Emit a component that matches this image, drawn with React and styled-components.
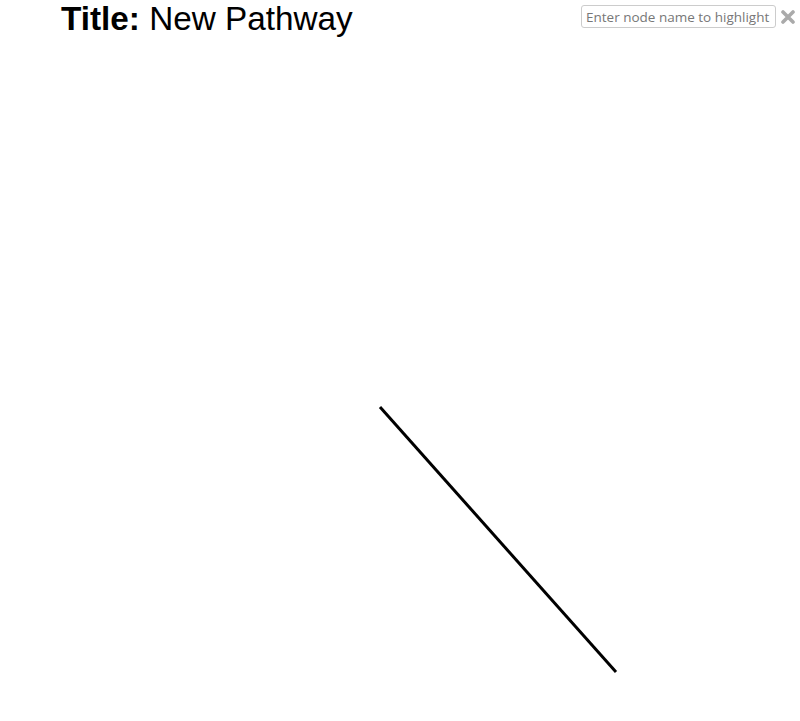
import React from "react"
import styled, { createGlobalStyle } from "styled-components"

const Global = createGlobalStyle`
  html, body { margin: 0; padding: 0; background: #fff; }
  body { width: 800px; height: 721px; overflow: hidden; }
`

const Page = styled.div`
  position: relative;
  width: 800px;
  height: 721px;
`

const Header = styled.header`
  display: flex;
  justify-content: space-between;
  align-items: flex-start;
  padding: 0 5px 0 61px;
`

const Title = styled.h1`
  margin: 0;
  font-family: "Liberation Sans", Arial, sans-serif;
  font-size: 33.3px;
  font-weight: normal;
  line-height: 38px;
  color: #000;
  b { font-weight: bold; }
`

const Search = styled.div`
  display: flex;
  align-items: center;
  gap: 5px;
  margin-top: 5px;
`

const Input = styled.input`
  box-sizing: border-box;
  width: 195px;
  height: 23px;
  padding: 0 4px;
  border: 1px solid #ccc;
  border-radius: 3px;
  font-family: "Open Sans", sans-serif;
  font-size: 13.5px;
  color: #333;
  outline: none;
  &::placeholder { color: #777; opacity: 1; }
`

const Clear = styled.button`
  display: flex;
  padding: 0;
  border: 0;
  background: none;
  cursor: pointer;
`

const Canvas = styled.svg`
  position: absolute;
  left: 0;
  top: 0;
  pointer-events: none;
`

const edges = [{ x1: 380, y1: 407, x2: 616, y2: 672 }]

export default function App() {
  return (
    <Page>
      <Global />
      <Canvas width="800" height="721">
        {edges.map((e, i) => (
          <line key={i} {...e} stroke="#000" strokeWidth="3" />
        ))}
      </Canvas>
      <Header>
        <Title><b>Title:</b> New Pathway</Title>
        <Search>
          <Input placeholder="Enter node name to highlight" />
          <Clear aria-label="clear">
            <svg width="14" height="14" viewBox="0 0 14 14">
              <path d="M2 2 L12 12 M12 2 L2 12" stroke="#aaa" strokeWidth="3.6" strokeLinecap="round" />
            </svg>
          </Clear>
        </Search>
      </Header>
    </Page>
  )
}
